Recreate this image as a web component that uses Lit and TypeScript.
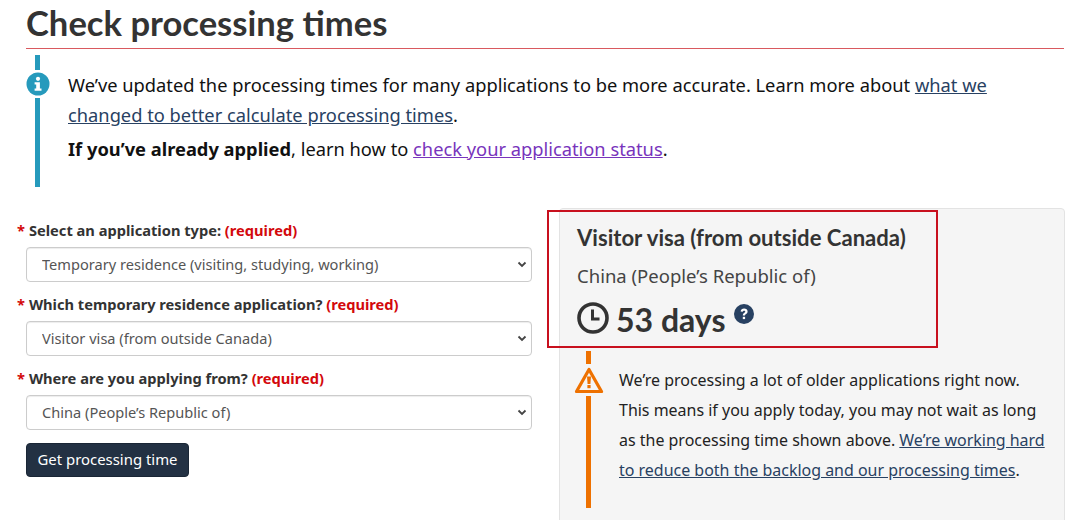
import { LitElement, html, css } from "lit";
import { customElement } from "lit/decorators.js";

@customElement("app-root")
export class AppRoot extends LitElement {
  static styles = css`
    :host { display: block; height: 520px; overflow: hidden; background: #fff; font-family: "Noto Sans", sans-serif; color: #333; box-sizing: border-box; padding: 0 16px 0 26px; }
    * { box-sizing: border-box; }
    h1 { margin: 0; font: 700 34.6px/41px Lato, sans-serif; color: #333; padding-top: 2px; height: 49px; border-bottom: 1px solid #d9595f; }
    .alert { position: relative; margin: 6px 0 0 9px; border-left: 5px solid #269abc; height: 132px; padding: 15px 0 0 28px; font-size: 18.29px; line-height: 30px; color: #111; }
    .alert p { margin: 0 0 4px; }
    .alert .ico { position: absolute; left: -14px; top: 15px; width: 24px; height: 28px; background: #fff; display: flex; align-items: center; justify-content: center; }
    a { color: #284162; text-decoration: underline; }
    a.visited { color: #7834bc; }
    .cols { display: grid; grid-template-columns: 506px 506px; column-gap: 27px; margin-top: 21px; }
    .form { padding-top: 11px; }
    .lab { display: block; margin: 0 0 6px -9px; font-size: 14.65px; font-weight: 700; line-height: 22px; height: 22px; color: #333; white-space: nowrap; }
    .lab .req { color: #d3080c; }
    .lab .star { color: #d3080c; margin-right: 4px; }
    .sel { position: relative; margin-bottom: 11px; }
    select { display: block; width: 100%; height: 35px; padding: 0 14px 2px 15px; appearance: none; border: 1px solid #ccc; border-radius: 4px; background: #fff; color: #555; font: 14.6px "Noto Sans", sans-serif; box-shadow: inset 0 1px 1px rgba(0,0,0,.075); }
    .chev { position: absolute; right: 5px; top: 14px; pointer-events: none; }
    button { display: block; margin-top: 13px; width: 163px; height: 34px; background: #233143; color: #fff; border: 1px solid #1a2635; border-radius: 4px; font: 14.9px "Noto Sans", sans-serif; padding: 0 0 2px; }
    .panel { position: relative; height: 340px; background: #f5f5f5; border: 1px solid #e3e3e3; border-radius: 4px; padding: 14px 17px 0; }
    .title { font: 700 22.1px/29px Lato, sans-serif; color: #333; white-space: nowrap; }
    .place { font-size: 18.5px; line-height: 22px; margin-top: 13px; color: #444; white-space: nowrap; }
    .time { display: flex; align-items: center; gap: 8px; margin-top: 9px; height: 44px; font: 700 32px/44px Lato, sans-serif; color: #333; }
    .time .label { padding-top: 4px; margin-left: -1px; }
    .time .q { align-self: flex-start; margin: 8px 0 0 1px; }
    .redbox { position: absolute; left: -13px; top: 1px; width: 391px; height: 138px; border: 2px solid #c8101e; pointer-events: none; }
    .warn { position: relative; margin: 11px 0 0 9px; border-left: 5px solid #ee7100; height: 157px; padding: 14px 0 0 28px; font-size: 15.97px; line-height: 30px; color: #222; white-space: nowrap; }
    .warn .ico { position: absolute; left: -17px; top: 13px; width: 30px; height: 32px; background: #f5f5f5; display: flex; align-items: center; justify-content: center; }
  `;

  private label(text: string) {
    return html`<label class="lab"><span class="star">*</span>${text} <span class="req">(required)</span></label>`;
  }

  private select(text: string) {
    return html`<div class="sel">
      <select><option>${text}</option></select>
      <svg class="chev" width="10" height="7" viewBox="0 0 10 7" fill="none" stroke="#444" stroke-width="1.800"><path d="M1.500 1.500 5 5l3.500-3.500"/></svg>
    </div>`;
  }

  render() {
    return html`
      <h1>Check processing times</h1>
      <div class="alert">
        <span class="ico">
          <svg width="24" height="24" viewBox="0 0 24 24">
            <circle cx="12" cy="12" r="11.5" fill="#269abc"/>
            <circle cx="12" cy="6.800" r="2.100" fill="#fff"/>
            <path d="M8.600 10.300h5.300v6.200h1.600v2.200H8.600v-2.200h1.600v-4H8.600z" fill="#fff"/>
          </svg>
        </span>
        <p>We’ve updated the processing times for many applications to be more accurate. Learn more about <a href="#">what we changed to better calculate processing times</a>.</p>
        <p><strong>If you’ve already applied</strong>, learn how to <a class="visited" href="#">check your application status</a>.</p>
      </div>
      <div class="cols">
        <form class="form">
          ${this.label("Select an application type:")}
          ${this.select("Temporary residence (visiting, studying, working)")}
          ${this.label("Which temporary residence application?")}
          ${this.select("Visitor visa (from outside Canada)")}
          ${this.label("Where are you applying from?")}
          ${this.select("China (People’s Republic of)")}
          <button type="button">Get processing time</button>
        </form>
        <section class="panel">
          <div class="title">Visitor visa (from outside Canada)</div>
          <div class="place">China (People’s Republic of)</div>
          <div class="time">
            <svg class="clk" width="32" height="32" viewBox="0 0 32 32" fill="none" stroke="#333" stroke-width="3.600">
              <circle cx="16" cy="16" r="14"/>
              <path d="M15.500 7.500v9.500h7" stroke-width="3"/>
            </svg>
            <span class="label">53 days</span>
            <svg class="q" width="20" height="20" viewBox="0 0 20 20">
              <circle cx="10" cy="10" r="10" fill="#284162"/>
              <path d="M6.600 7.600c.2-1.900 1.600-3 3.500-3 2 0 3.500 1.200 3.500 2.900 0 1.500-.9 2.100-1.800 2.700-.6.400-.8.700-.8 1.300H8.800c0-1.300.4-2 1.300-2.600.7-.5 1.200-.8 1.200-1.300 0-.5-.5-.9-1.200-.9-.8 0-1.200.4-1.400 1.100z" fill="#fff"/>
              <rect x="8.800" y="12.800" width="2.300" height="2.300" fill="#fff"/>
            </svg>
          </div>
          <div class="redbox"></div>
          <div class="warn">
            <span class="ico">
              <svg width="30" height="26" viewBox="0 0 30 26">
                <path d="M15 2.500 27.500 24.500H2.500Z" fill="none" stroke="#ee7100" stroke-width="3.200" stroke-linejoin="round"/>
                <path d="M13 9.500h4l-.6 7.500h-2.800z" fill="#ee7100"/>
                <rect x="13.400" y="18" width="3.200" height="3.200" fill="#ee7100"/>
              </svg>
            </span>
            We’re processing a lot of older applications right now.<br>
            This means if you apply today, you may not wait as long<br>
            as the processing time shown above. <a href="#">We’re working hard<br>
            to reduce both the backlog and our processing times</a>.
          </div>
        </section>
      </div>
    `;
  }
}
